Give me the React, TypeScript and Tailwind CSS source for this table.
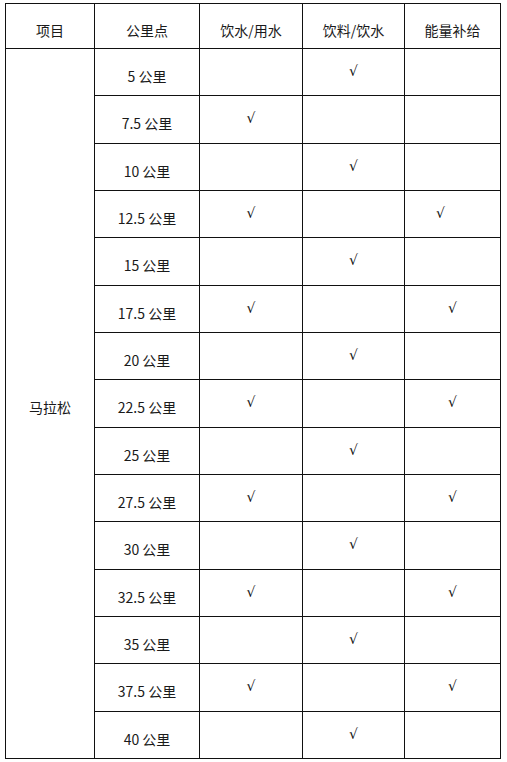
const rows = [
  { km: "5 公里", water: false, drink: true, energy: false },
  { km: "7.5 公里", water: true, drink: false, energy: false },
  { km: "10 公里", water: false, drink: true, energy: false },
  { km: "12.5 公里", water: true, drink: false, energy: true, shift: true },
  { km: "15 公里", water: false, drink: true, energy: false },
  { km: "17.5 公里", water: true, drink: false, energy: true },
  { km: "20 公里", water: false, drink: true, energy: false },
  { km: "22.5 公里", water: true, drink: false, energy: true },
  { km: "25 公里", water: false, drink: true, energy: false },
  { km: "27.5 公里", water: true, drink: false, energy: true },
  { km: "30 公里", water: false, drink: true, energy: false },
  { km: "32.5 公里", water: true, drink: false, energy: true },
  { km: "35 公里", water: false, drink: true, energy: false },
  { km: "37.5 公里", water: true, drink: false, energy: true },
  { km: "40 公里", water: false, drink: true, energy: false },
];

function Cell({ children, className = "" }: { children?: React.ReactNode; className?: string }) {
  return (
    <div className={"flex items-center justify-center border-r border-b border-[#111] " + className}>
      {children}
    </div>
  );
}

function Check({ on }: { on: boolean }) {
  if (!on) return null;
  return <span className="text-[14px] leading-none text-[#111] pb-[2px] font-['DejaVu_Sans',sans-serif]">√</span>;
}

export default function App() {
  return (
    <div className="w-[507px] h-[762px] bg-white pt-[3px] pl-[5px] font-['Noto_Sans_CJK_SC','Noto_Sans',sans-serif] text-[14px] text-[#1a1a1a]">
      <div className="grid grid-cols-[89px_105px_103px_102px_96px] grid-rows-[45px_repeat(15,47.33px)] w-fit border-l border-t border-[#111]">
        {/* header */}
        <Cell className="pt-[9px]">项目</Cell>
        <Cell className="pt-[9px]">公里点</Cell>
        <Cell className="pt-[9px]">饮水/用水</Cell>
        <Cell className="pt-[9px]">饮料/饮水</Cell>
        <Cell className="pt-[9px]">能量补给</Cell>

        {/* merged first column */}
        <Cell className="row-span-15 pt-[9px]">马拉松</Cell>

        {rows.map((r) => (
          <div key={r.km} className="contents">
            <Cell className="pt-[9px]">{r.km}</Cell>
            <Cell><Check on={r.water} /></Cell>
            <Cell><Check on={r.drink} /></Cell>
            <Cell className={r.shift ? "pr-[24px]" : ""}><Check on={r.energy} /></Cell>
          </div>
        ))}
      </div>
    </div>
  );
}
